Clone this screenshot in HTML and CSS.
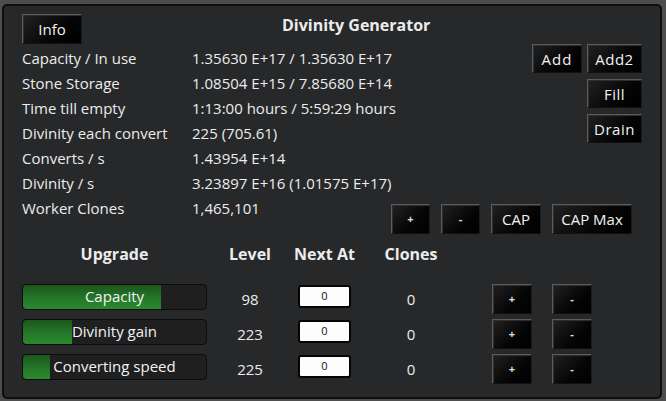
FILE: index.html
```html
<!DOCTYPE html>
<html>
<head>
<meta charset="utf-8">
<link rel="stylesheet" href="styles.css">
</head>
<body>
<div class="panel">
  <div class="head">
    <button class="btn info">Info</button>
    <div class="title">Divinity Generator</div>
  </div>
  <div class="body">
    <div class="stats">
      <div class="lbl">Capacity / In use</div><div class="val">1.35630 E+17 / 1.35630 E+17</div>
      <div class="lbl">Stone Storage</div><div class="val">1.08504 E+15 / 7.85680 E+14</div>
      <div class="lbl">Time till empty</div><div class="val">1:13:00 hours / 5:59:29 hours</div>
      <div class="lbl">Divinity each convert</div><div class="val">225 (705.61)</div>
      <div class="lbl">Converts / s</div><div class="val">1.43954 E+14</div>
      <div class="lbl">Divinity / s</div><div class="val">3.23897 E+16 (1.01575 E+17)</div>
      <div class="lbl">Worker Clones</div><div class="val">1,465,101</div>
    </div>
    <div class="side">
      <div class="addrow">
        <button class="btn add">Add</button>
        <button class="btn add2">Add2</button>
      </div>
      <button class="btn add2">Fill</button>
      <button class="btn add2">Drain</button>
      <div class="ctrl">
        <button class="btn small pm">+</button>
        <button class="btn small pm">-</button>
        <button class="btn cap">CAP</button>
        <button class="btn capmax">CAP Max</button>
      </div>
    </div>
  </div>
  <div class="table">
    <div class="th">Upgrade</div>
    <div class="th">Level</div>
    <div class="th">Next At</div>
    <div class="th">Clones</div>
    <div></div>
    <div></div>

    <div class="bar"><div class="fill" style="width:138px"></div><span class="barlbl">Capacity</span></div>
    <div class="num">98</div>
    <div class="inp">0</div>
    <div class="num">0</div>
    <button class="btn small rowbtn">+</button>
    <button class="btn small rowbtn">-</button>

    <div class="bar"><div class="fill" style="width:49px"></div><span class="barlbl">Divinity gain</span></div>
    <div class="num">223</div>
    <div class="inp">0</div>
    <div class="num">0</div>
    <button class="btn small rowbtn">+</button>
    <button class="btn small rowbtn">-</button>

    <div class="bar"><div class="fill" style="width:27px"></div><span class="barlbl">Converting speed</span></div>
    <div class="num">225</div>
    <div class="inp">0</div>
    <div class="num">0</div>
    <button class="btn small rowbtn">+</button>
    <button class="btn small rowbtn">-</button>
  </div>
</div>
</body>
</html>
```

FILE: styles.css
```css
html, body {
  margin: 0;
  padding: 0;
  background: #4d4d4d;
  width: 666px;
  height: 401px;
  overflow: hidden;
}

.panel {
  box-sizing: border-box;
  width: 660px;
  height: 395px;
  margin: 4px 0 0 2px;
  border: 2px solid #0e0e0e;
  border-radius: 5px;
  background: #27282a;
  padding: 8px 18px 0 18px;
  font-family: "Open Sans", "Noto Sans", sans-serif;
  font-size: 15px;
  color: #ececec;
}

.btn {
  box-sizing: border-box;
  font-family: "Open Sans", "Noto Sans", sans-serif;
  font-size: 15px;
  color: #f2f2f2;
  background: linear-gradient(135deg, #222 0%, #050505 60%, #000 100%);
  border: 1px solid;
  border-color: #5c5c5c #1c1c1c #111 #5c5c5c;
  box-shadow: inset 1px 1px 0 #2e2e2e;
  padding: 0;
  margin: 0;
  height: 30px;
  line-height: 26px;
  text-align: center;
  cursor: pointer;
}

.head {
  display: flex;
  height: 30px;
}

.info {
  width: 60px;
}

.title {
  margin-left: 200px;
  font-weight: 700;
  font-size: 16px;
  line-height: 22px;
  margin-top: 0;
}

.body {
  display: flex;
  margin-top: 2px;
}

.stats {
  flex: none;
  width: 360px;
  display: grid;
  grid-template-columns: 170px 1fr;
  grid-auto-rows: 25px;
  line-height: 25px;
  white-space: nowrap;
}

.side {
  flex: 1;
  min-width: 0;
  display: flex;
  flex-direction: column;
  align-items: flex-end;
  gap: 6px;
}

.addrow {
  display: flex;
  gap: 5px;
  margin-top: -2px;
}

.add {
  width: 50px;
  height: 29px;
  letter-spacing: 1px;
}

.add2 {
  width: 55px;
  height: 29px;
  letter-spacing: 0.5px;
}

.ctrl {
  display: flex;
  flex: none;
  margin-top: 55px;
  margin-right: 10px;
  gap: 11px;
}

.small {
  width: 39px;
  font-size: 11px;
  font-weight: 700;
  color: #e0e0e0;
}

.cap {
  width: 50px;
}

.capmax {
  width: 80px;
}

.table {
  display: grid;
  grid-template-columns: 185px 86px 63px 110px 66px 60px;
  grid-template-rows: 45px 30px 30px 30px;
  row-gap: 5px;
}

.th {
  font-weight: 700;
  font-size: 16px;
  line-height: 40px;
  text-align: center;
}

.bar {
  position: relative;
  box-sizing: border-box;
  height: 26px;
  border: 1px solid #0c0c0c;
  border-radius: 4px;
  background: #1f1f20;
  overflow: hidden;
}

.fill {
  height: 100%;
  background: linear-gradient(to bottom, #1c561c 0%, #25772a 55%, #2a8a2e 100%);
  border-radius: 3px 0 0 3px;
}

.barlbl {
  position: absolute;
  left: 0;
  right: 0;
  top: 0;
  line-height: 23px;
  text-align: center;
  color: #f2f2f2;
  white-space: nowrap;
}

.num {
  text-align: center;
  line-height: 31px;
}

.inp {
  justify-self: center;
  box-sizing: border-box;
  width: 53px;
  height: 23px;
  margin-top: 1px;
  background: #fdfdfd;
  border: 2px solid #050505;
  border-radius: 3px;
  color: #111;
  font-size: 11px;
  line-height: 17px;
  text-align: center;
}

.rowbtn {
  justify-self: end;
  width: 40px;
}
```
